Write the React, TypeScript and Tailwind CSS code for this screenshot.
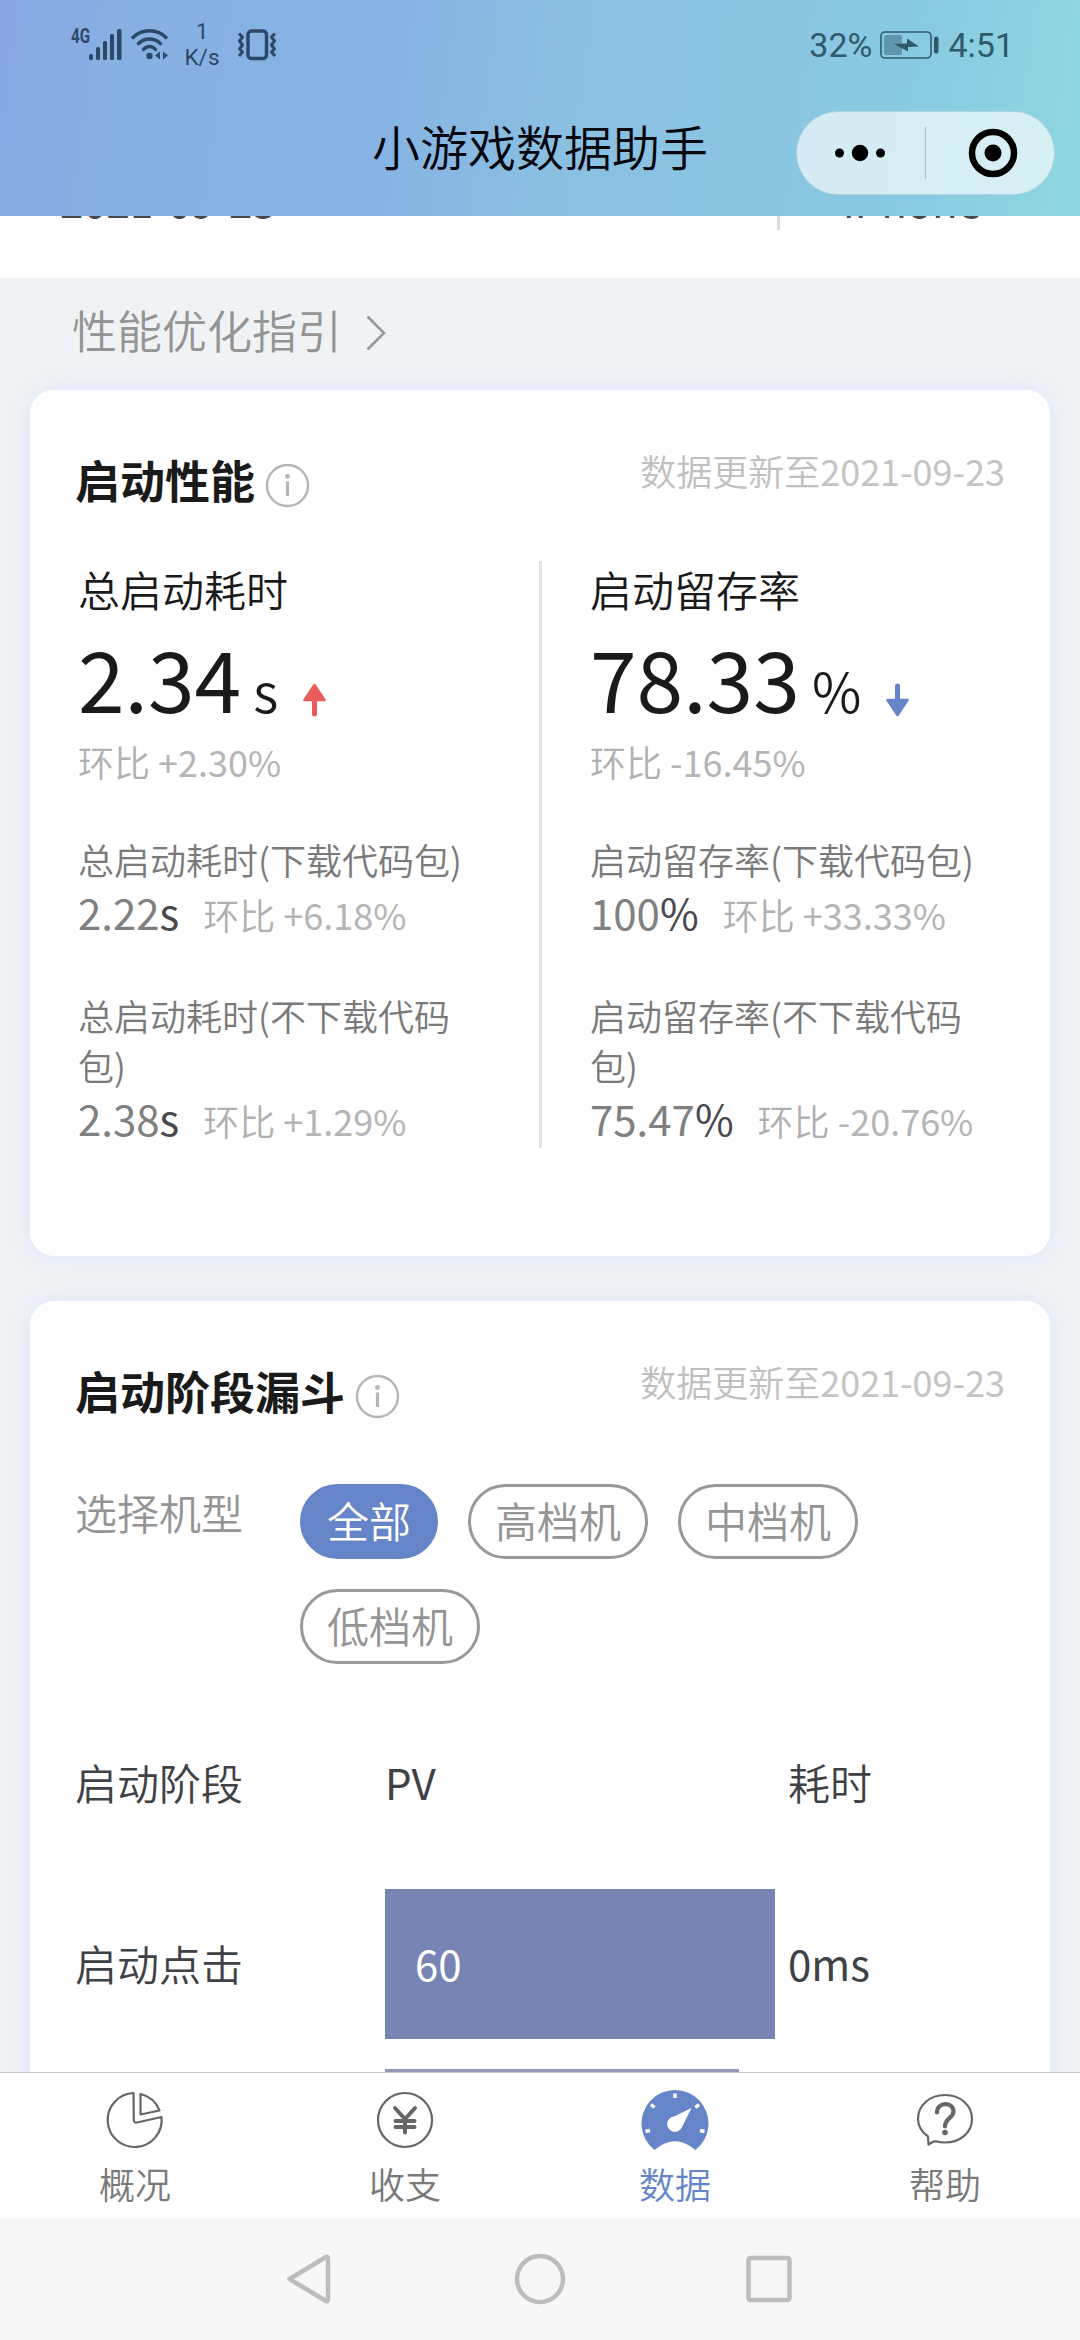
import type { ReactNode } from "react"
import clsx from "clsx"

const performance = [
  {
    title: "总启动耗时",
    value: "2.34",
    unit: "s",
    trend: "up",
    ratio: "+2.30%",
    details: [
      { label: "总启动耗时(下载代码包)", value: "2.22", unit: "s", ratio: "+6.18%" },
      { label: "总启动耗时(不下载代码包)", value: "2.38", unit: "s", ratio: "+1.29%" },
    ],
  },
  {
    title: "启动留存率",
    value: "78.33",
    unit: "%",
    trend: "down",
    ratio: "-16.45%",
    details: [
      { label: "启动留存率(下载代码包)", value: "100", unit: "%", ratio: "+33.33%" },
      { label: "启动留存率(不下载代码包)", value: "75.47", unit: "%", ratio: "-20.76%" },
    ],
  },
]

const models = ["全部", "高档机", "中档机", "低档机"]

function StatusBar() {
  return (
    <div className="flex h-[88px] items-start justify-between pl-[71px] pr-[66px] font-[Roboto,sans-serif] font-normal">
      <div className="flex items-start text-[#2b4866]">
        <span className="mt-[26px] w-[18px] origin-left scale-x-[0.76] text-[20px] font-bold leading-[20px]">4G</span>
        <svg className="mt-[29px]" width="33" height="31" viewBox="0 0 33 31" fill="currentColor">
          <rect x="0" y="25" width="4" height="6" rx="1.5" />
          <rect x="7" y="18" width="4" height="13" rx="1.5" />
          <rect x="14" y="12" width="4" height="19" rx="1.5" />
          <rect x="21" y="5" width="4" height="26" rx="1.5" />
          <rect x="28" y="0" width="4.5" height="31" rx="1.5" />
        </svg>
        <svg className="ml-[9px] mt-[29px]" width="38" height="31" viewBox="0 0 38 31" fill="none" stroke="currentColor" strokeWidth="3.4" strokeLinecap="round">
          <path d="M2 8.5C11 -0.5 26 -0.5 35 8.5" />
          <path d="M7.5 14.5C14 8.5 23 8.5 29.5 14.5" />
          <path d="M12.5 20.5C16 16.5 21 16.5 24.5 20.5" />
          <circle cx="18.5" cy="27" r="3.2" fill="currentColor" stroke="none" />
          <path d="M29 22.5V30.5L24 26.5ZM32 30.5V22.5L37 26.5Z" fill="currentColor" stroke="none" />
        </svg>
        <div className="ml-[15px] mt-[18px] w-[36px] text-center text-[22.5px] leading-[26px]">
          <div>1</div>
          <div>K/s</div>
        </div>
        <svg className="ml-[16px] mt-[28px]" width="42" height="33" viewBox="0 0 42 33" fill="none" stroke="currentColor" strokeWidth="3.4">
          <rect x="12" y="3" width="18.5" height="27.5" rx="3.5" />
          <path d="M3 5.5L6.5 9L3.5 13L6.5 17L3.5 21L6.5 24L3 28" strokeWidth="3" strokeLinejoin="round" />
          <path d="M39 5.5L35.5 9L38.5 13L35.5 17L38.5 21L35.5 24L39 28" strokeWidth="3" strokeLinejoin="round" />
        </svg>
      </div>
      <div className="flex items-start text-[34px] leading-[40px] text-[#2f5a6b]">
        <span className="mt-[25px]">32%</span>
        <svg className="ml-[8px] mr-[9px] mt-[31px]" width="59" height="28" viewBox="0 0 59 28" fill="none">
          <rect x="1" y="1" width="50" height="26" rx="4" stroke="currentColor" strokeWidth="1.6" />
          <rect x="4" y="4" width="18" height="20" rx="2" fill="currentColor" opacity="0.45" />
          <path d="M14 13L27 12.5V7.5L39 15.5L28 16V20.5Z" fill="currentColor" />
          <rect x="54" y="5.5" width="4.5" height="17" rx="2" fill="currentColor" />
        </svg>
        <span className="mt-[25px]">4:51</span>
      </div>
    </div>
  )
}

function Header() {
  return (
    <header className="h-[216px] shrink-0 bg-[linear-gradient(98deg,#87a6e3_0%,#87b0e2_11%,#86b3e4_36%,#8abfe1_52%,#8bc4e2_66%,#88c9e3_82%,#8dd5e0_97%)]">
      <StatusBar />
      <div className="grid h-[128px] grid-cols-[1fr_auto_1fr] items-start">
        <h1 className="col-start-2 mt-[22px] text-[48px] leading-[70px] text-[#05070d]">小游戏数据助手</h1>
        <div className="mr-[25px] mt-[23px] flex h-[84px] w-[259px] items-center justify-self-end rounded-full border border-[#7fa9c3]/40 bg-white/65">
          <svg className="ml-[37px]" width="52" height="18" viewBox="0 0 52 18">
            <circle cx="5.5" cy="9" r="4.5" />
            <circle cx="26" cy="9" r="8.2" />
            <circle cx="46.5" cy="9" r="4.5" />
          </svg>
          <div className="ml-[39px] h-[52px] w-px bg-[#a9bcc7]" />
          <svg className="ml-[42px]" width="50" height="50" viewBox="0 0 50 50">
            <circle cx="25" cy="25" r="21" fill="none" stroke="black" strokeWidth="6.5" />
            <circle cx="25" cy="25" r="8.5" />
          </svg>
        </div>
      </div>
    </header>
  )
}

function InfoIcon() {
  return (
    <svg className="ml-[10px] mt-[8px]" width="45" height="45" viewBox="0 0 45 45" fill="none" stroke="#b5b5b5">
      <circle cx="22.5" cy="22.5" r="20.5" strokeWidth="2.4" />
      <path d="M22.5 18.5V33" strokeWidth="3.2" />
      <circle cx="22.5" cy="13.5" r="2.4" fill="#b5b5b5" stroke="none" />
    </svg>
  )
}

function TrendArrow({ trend }: { trend: string }) {
  return (
    <svg
      className={clsx("ml-[25px] mt-[66px]", trend === "up" ? "text-[#ea5c5c]" : "rotate-180 text-[#6684c8]")}
      width="23"
      height="34"
      viewBox="0 0 23 34"
      fill="currentColor"
      stroke="currentColor"
      strokeLinejoin="round"
      strokeLinecap="round"
    >
      <path d="M11.5 2L21.5 17H1.5Z" strokeWidth="2.5" />
      <path d="M11.5 16V31" strokeWidth="5" />
    </svg>
  )
}

function Card({ title, className, children }: { title: string; className?: string; children: ReactNode }) {
  return (
    <section className={clsx("rounded-[24px] bg-white px-[45px] shadow-[0_0_22px_rgba(215,221,255,0.75)]", className)}>
      <div className="flex h-[171px] items-start justify-between">
        <div className="flex pt-[65px]">
          <h2 className="text-[45px] font-bold leading-[50px] text-[#1a1a1a]">{title}</h2>
          <InfoIcon />
        </div>
        <span className="pt-[55px] text-[36px] leading-[50px] text-[#c0c0c0]">
          数据更新至<span className="font-normal text-[#c4c4c4]">2021-09-23</span>
        </span>
      </div>
      {children}
    </section>
  )
}

function Ratio({ value, className }: { value: string; className?: string }) {
  return (
    <span className={clsx("whitespace-pre text-[36px] leading-[50px] text-[#b0b0b0]", className)}>
      环比<span className="font-normal text-[#b5b5b5]"> {value}</span>
    </span>
  )
}

function PerformanceCard() {
  return (
    <Card title="启动性能" className="h-[866px]">
      <div className="grid h-[587px] grid-cols-[464px_3px_1fr]">
        {performance.map((item, i) => (
          <div key={item.title} className={clsx("pl-[3px]", i === 1 && "col-start-3 pl-[48px]")}>
            <div className="text-[42px] leading-[56px] text-[#1a1a1a]">{item.title}</div>
            <div className="flex h-[119px] items-start text-[#1a1a1a]">
              <div className="whitespace-pre text-[84px] font-normal leading-[119px]">
                {item.value}
                <span className="text-[54px] font-[350] leading-none"> {item.unit}</span>
              </div>
              <TrendArrow trend={item.trend} />
            </div>
            <Ratio value={item.ratio} className="block" />
            <div className="mt-12 flex flex-col gap-[50px]">
              {item.details.map((d) => (
                <div key={d.label}>
                  <div className="w-[385px] text-[36px] leading-[50px] text-[#7a7a7a]">{d.label}</div>
                  <div className="flex h-[56px] items-baseline text-[42px] font-normal leading-[56px] text-[#808080]">
                    {d.value}
                    <span className="text-[#47494d]">{d.unit}</span>
                    <Ratio value={d.ratio} className="ml-6 font-[350]" />
                  </div>
                </div>
              ))}
            </div>
          </div>
        ))}
        <div className="col-start-2 row-start-1 bg-[#e2e2e2]" />
      </div>
    </Card>
  )
}

function FunnelCard() {
  return (
    <Card title="启动阶段漏斗" className="mt-[45px] h-[900px]">
      <div className="mt-[12px] flex text-[42px] text-[#949494]">
        <div className="w-[225px] shrink-0 leading-[56px]">选择机型</div>
        <div className="flex flex-wrap gap-[30px]">
          {models.map((model, i) => (
            <div
              key={model}
              className={clsx(
                "h-[75px] rounded-full border-[3px] px-6 leading-[66px]",
                i === 0 ? "border-[#6684c8] bg-[#6684c8] text-white" : "border-[#999]"
              )}
            >
              {model}
            </div>
          ))}
        </div>
      </div>
      <div className="mt-[90px] grid grid-cols-[310px_403px_1fr] text-[42px] leading-[56px] text-[#3e4145]">
        <div>启动阶段</div>
        <div className="font-normal">PV</div>
        <div>耗时</div>
      </div>
      <div className="mt-[79px] grid grid-cols-[310px_403px_1fr] gap-y-[30px] text-[42px] leading-[148px] text-[#3e4145]">
        <div>启动点击</div>
        <div className="h-[150px] w-[390px] bg-[#7884b4] pl-[30px] font-normal text-white">60</div>
        <div className="font-normal">0ms</div>
        <div className="col-start-2 h-[150px] w-[354px] bg-[#9497b3]" />
      </div>
    </Card>
  )
}

function PieIcon() {
  return (
    <svg width="70" height="62" viewBox="0 0 70 62" fill="none" stroke="#666" strokeWidth="2.2" strokeLinejoin="round">
      <path d="M33.5 4A27 27 0 1 0 61.5 28L37 33.5Q34 34 33.8 31Z" />
      <path d="M40.5 5V25.5L59.5 21.5A27 27 0 0 0 40.5 5Z" />
    </svg>
  )
}

function YuanIcon() {
  return (
    <svg width="70" height="62" viewBox="0 0 70 62" fill="none" stroke="#666" strokeWidth="2.2">
      <circle cx="35" cy="31" r="27" />
      <path d="M25 19L35 30L45 19M25.5 32H44.5M25.5 38H44.5M35 29V43.5" strokeWidth="4" strokeLinecap="round" />
    </svg>
  )
}

function GaugeIcon() {
  return (
    <svg width="70" height="62" viewBox="0 0 70 62">
      <path d="M14.5 61A33.5 33.5 0 1 1 55.5 61Q35 43.5 14.5 61Z" fill="#6684c8" />
      <path d="M35 4.5V9M11 15.5L14.5 18.5M59 15.5L55.5 18.5M5.5 42.5L10 41.5M64.5 42.5L60 41.5" stroke="white" strokeWidth="3.5" />
      <path d="M51.5 19L42 38A7.7 7.7 0 1 1 34 27.5Z" fill="white" />
    </svg>
  )
}

function HelpIcon() {
  return (
    <svg width="70" height="62" viewBox="0 0 70 62" fill="none" stroke="#666" strokeWidth="2.2" strokeLinejoin="round">
      <path d="M18.5 55.5L18 47.5C11 42.5 8 37 8 30C8 16 20 6 35 6C50 6 62 16 62 30C62 43.5 50 53.5 35 53.5C31.5 53.5 28.5 53 26 52.2Q22.5 52.5 18.5 55.5Z" />
      <path d="M27 23.5C27 12.5 43.5 12.5 43.5 22.5C43.5 29 35 29 35 37.5" strokeWidth="4.2" strokeLinecap="round" />
      <circle cx="35" cy="43.5" r="2.8" fill="#666" stroke="none" />
    </svg>
  )
}

const tabs = [
  { label: "概况", icon: <PieIcon /> },
  { label: "收支", icon: <YuanIcon /> },
  { label: "数据", icon: <GaugeIcon />, active: true },
  { label: "帮助", icon: <HelpIcon /> },
]

function TabBar() {
  return (
    <nav className="grid h-[146px] shrink-0 grid-cols-4 border-t border-[#c8c8cc] bg-white">
      {tabs.map((tab) => (
        <div key={tab.label} className="flex flex-col items-center pt-[16px]">
          {tab.icon}
          <span className={clsx("mt-[8px] text-[36px] leading-[48px]", tab.active ? "text-[#6684c8]" : "text-[#7a7a7a]")}>
            {tab.label}
          </span>
        </div>
      ))}
    </nav>
  )
}

function SystemNav() {
  return (
    <div className="h-[122px] shrink-0 bg-[#f7f7f7] pt-[3px]">
      <div className="flex items-start justify-center gap-[178px] border-t border-[#f0f0f0] pt-[29px]">
        <svg width="52" height="56" viewBox="0 0 52 56" fill="none" stroke="#bdbdbd" strokeWidth="4.5" strokeLinejoin="round">
          <path d="M5.5 28L42 6Q44 5 44 8V48Q44 51 42 50L5.5 28Z" />
        </svg>
        <svg width="52" height="56" viewBox="0 0 52 56" fill="none" stroke="#bdbdbd" strokeWidth="4.5">
          <circle cx="26" cy="28" r="23" />
        </svg>
        <svg width="52" height="56" viewBox="0 0 52 56" fill="none" stroke="#bdbdbd" strokeWidth="4.5">
          <rect x="4.5" y="7" width="41" height="42" rx="2" />
        </svg>
      </div>
    </div>
  )
}

export default function App() {
  return (
    <div className="flex h-[2340px] w-[1080px] flex-col overflow-hidden bg-[#eff3f6] font-['Noto_Sans_CJK_SC',sans-serif] font-[350]">
      <Header />
      <main className="min-h-0 flex-1 overflow-hidden">
        {/* tail of the scrolled summary row */}
        <div className="flex h-[62px] items-start bg-white pl-[60px] text-[42px] font-normal leading-[56px] text-[#44474b]">
          <span className="-mt-[44px] w-[717px]">2021-09-23</span>
          <div className="h-[14px] w-[3px] bg-[#dcdcdc]" />
          <span className="-mt-[44px] ml-[63px]">iPhone</span>
        </div>
        <div className="flex h-[112px] items-start pl-[72px] text-[#949494]">
          <span className="mt-[24px] text-[45px] leading-[56px]">性能优化指引</span>
          <svg className="ml-[24px] mt-[37px]" width="22" height="36" viewBox="0 0 22 36" fill="none" stroke="#999" strokeWidth="2.6">
            <path d="M1.5 1.5L18 18L1.5 34.5" />
          </svg>
        </div>
        <div className="px-[30px]">
          <PerformanceCard />
          <FunnelCard />
        </div>
      </main>
      <TabBar />
      <SystemNav />
    </div>
  )
}
